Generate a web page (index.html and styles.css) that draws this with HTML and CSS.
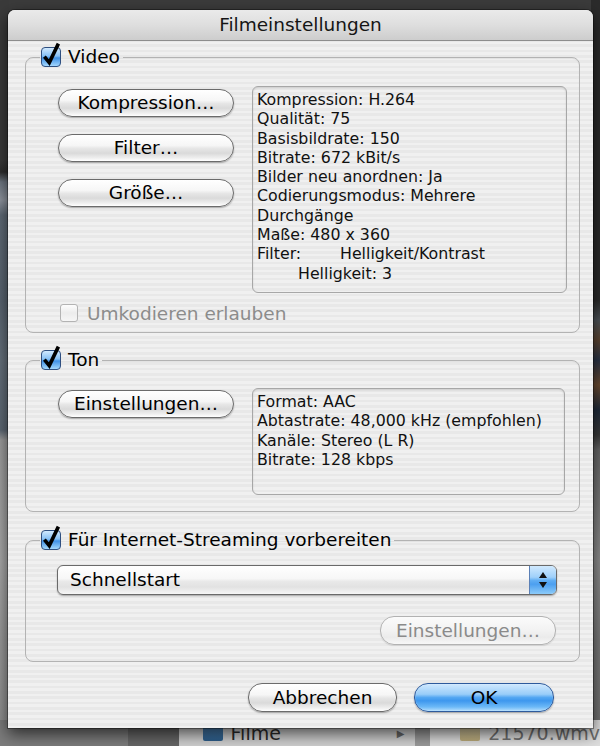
FILE: index.html
```html
<!DOCTYPE html>
<html lang="de">
<head>
<meta charset="utf-8">
<title>Filmeinstellungen</title>
<link rel="stylesheet" href="styles.css">
</head>
<body>
<div class="desktop">
  <div class="backdrop" aria-hidden="true">
    <div class="bg-left"></div>
    <div class="bg-right"></div>
    <div class="bg-bottom">
      <div class="bg-pane bg-pane0"></div>
      <div class="bg-pane bg-pane1"></div>
      <div class="bg-pane bg-pane2"><span class="bg-icon folder"></span><span class="bg-text">Filme</span><span class="bg-tri">&#9654;</span></div>
      <div class="bg-pane bg-pane3"></div>
      <div class="bg-pane bg-pane4"><span class="bg-icon file"></span><span class="bg-text light">21570.wmv</span></div>
    </div>
  </div>

  <div class="dialog">
    <div class="titlebar">Filmeinstellungen</div>
    <div class="content">

      <fieldset class="group group-video">
        <legend>
          <svg class="check" width="20" height="20" viewBox="0 0 20 20"><defs><linearGradient id="cb1" x1="0" y1="0" x2="0" y2="1"><stop offset="0" stop-color="#d6ecff"/><stop offset="0.45" stop-color="#86c0f6"/><stop offset="0.55" stop-color="#3f90e6"/><stop offset="1" stop-color="#a9dcff"/></linearGradient></defs><rect x="0.5" y="0.5" width="19" height="19" rx="3.5" fill="url(#cb1)" stroke="#2f4f80"/><path d="M3.4 9.6 L8.3 15.6 L17.4 -3.4" fill="none" stroke="#000" stroke-width="3.6" stroke-linejoin="miter"/></svg>Video
        </legend>
        <div class="row">
          <div class="btncol">
            <div class="btn">Kompression…</div>
            <div class="btn">Filter…</div>
            <div class="btn">Größe…</div>
          </div>
          <div class="info info-video">
            <div>Kompression: H.264</div>
            <div>Qualität: 75</div>
            <div>Basisbildrate: 150</div>
            <div>Bitrate: 672 kBit/s</div>
            <div>Bilder neu anordnen: Ja</div>
            <div>Codierungsmodus: Mehrere</div>
            <div>Durchgänge</div>
            <div>Maße: 480 x 360</div>
            <div><span class="tab">Filter:</span>Helligkeit/Kontrast</div>
            <div class="indent">Helligkeit: 3</div>
          </div>
        </div>
        <div class="recode">
          <span class="check-off"></span>Umkodieren erlauben
        </div>
      </fieldset>

      <fieldset class="group group-sound">
        <legend>
          <svg class="check" width="20" height="20" viewBox="0 0 20 20"><defs><linearGradient id="cb2" x1="0" y1="0" x2="0" y2="1"><stop offset="0" stop-color="#d6ecff"/><stop offset="0.45" stop-color="#86c0f6"/><stop offset="0.55" stop-color="#3f90e6"/><stop offset="1" stop-color="#a9dcff"/></linearGradient></defs><rect x="0.5" y="0.5" width="19" height="19" rx="3.5" fill="url(#cb2)" stroke="#2f4f80"/><path d="M3.4 9.6 L8.3 15.6 L17.4 -3.4" fill="none" stroke="#000" stroke-width="3.6" stroke-linejoin="miter"/></svg>Ton
        </legend>
        <div class="row row-sound">
          <div class="btncol btncol-sound">
            <div class="btn">Einstellungen…</div>
          </div>
          <div class="info info-sound">
            <div>Format: AAC</div>
            <div>Abtastrate: 48,000 kHz (empfohlen)</div>
            <div>Kanäle: Stereo (L R)</div>
            <div>Bitrate: 128 kbps</div>
          </div>
        </div>
      </fieldset>

      <fieldset class="group group-stream">
        <legend>
          <svg class="check" width="20" height="20" viewBox="0 0 20 20"><defs><linearGradient id="cb3" x1="0" y1="0" x2="0" y2="1"><stop offset="0" stop-color="#d6ecff"/><stop offset="0.45" stop-color="#86c0f6"/><stop offset="0.55" stop-color="#3f90e6"/><stop offset="1" stop-color="#a9dcff"/></linearGradient></defs><rect x="0.5" y="0.5" width="19" height="19" rx="3.5" fill="url(#cb3)" stroke="#2f4f80"/><path d="M3.4 9.6 L8.3 15.6 L17.4 -3.4" fill="none" stroke="#000" stroke-width="3.6" stroke-linejoin="miter"/></svg>Für Internet-Streaming vorbereiten
        </legend>
        <div class="popup">
          <div class="popup-label">Schnellstart</div>
          <div class="popup-arrows">
            <svg width="10" height="20" viewBox="0 0 10 20"><path d="M5 2 L9 8 L1 8 Z" fill="#111"/><path d="M1 12 L9 12 L5 18 Z" fill="#111"/></svg>
          </div>
        </div>
        <div class="btn btn-disabled">Einstellungen…</div>
      </fieldset>

      <div class="footer">
        <div class="btn btn-cancel">Abbrechen</div>
        <div class="btn btn-ok">OK</div>
      </div>

    </div>
  </div>
</div>
</body>
</html>
```

FILE: styles.css
```css
* { box-sizing: border-box; }
html, body { margin: 0; padding: 0; }
body {
  font-family: "DejaVu Sans", "Liberation Sans", sans-serif;
  background: #3c3c3c;
}
.desktop {
  position: relative;
  width: 600px;
  height: 746px;
  overflow: hidden;
  background: #3b3b3b;
}

/* ---------- blurred desktop behind the sheet ---------- */
.backdrop { position: absolute; inset: 0; }
.bg-left {
  position: absolute; left: 0; top: 0; width: 9px; height: 746px;
  background: linear-gradient(to bottom,
    #3a3a3a 0, #3a3a3a 160px, #2e2e2e 172px, #6e7782 182px, #9096a0 200px,
    #606b77 215px, #5a6571 300px, #66717c 360px, #5d6874 430px,
    #9d9d9d 440px, #a9a9a9 560px, #9a9a9a 640px, #8e8e8e 746px);
}
.bg-right {
  position: absolute; right: 0; top: 0; width: 9px; height: 746px;
  background: linear-gradient(to bottom,
    #2b2b2b 0, #2b2b2b 300px, #4d5358 320px, #5b4330 340px, #2a3446 360px,
    #6a4a30 385px, #1f2a3a 410px, #3a3a3a 435px, #686868 450px,
    #8e8e8e 560px, #7a7a7a 640px, #6e6e6e 746px);
}
.bg-bottom {
  position: absolute; left: 0; top: 720px; width: 600px; height: 26px;
  display: flex;
}
.bg-pane { height: 26px; display: flex; align-items: center; }
.bg-pane0 { width: 130px; background: #7c7c7c; }
.bg-pane1 { width: 52px; background: #666666; }
.bg-pane2 { width: 240px; background: #cfcfcf; padding-left: 24px; gap: 8px; }
.bg-pane3 { width: 16px; background: #9a9a9a; }
.bg-pane4 { flex: 1; background: #dedede; padding-left: 30px; gap: 8px; }
.bg-icon { width: 20px; height: 16px; border-radius: 2px; }
.bg-icon.folder { background: linear-gradient(#4f86b8, #2c5d8a); }
.bg-icon.file { background: linear-gradient(#e2d6b0, #b8a878); }
.bg-text { font-size: 19px; color: #2a2a2a; line-height: 20px; }
.bg-text.light { color: #707070; }
.bg-tri { margin-left: auto; margin-right: 10px; font-size: 10px; color: #666; }

/* ---------- sheet ---------- */
.dialog {
  position: relative;
  z-index: 1;
  width: 585px;
  height: 718px;
  margin: 10px 0 0 8px;
  border-radius: 7px 7px 0 0;
  overflow: hidden;
  background: repeating-linear-gradient(to bottom,
    #f0f0f0 0, #f0f0f0 2.6px, #e8e8e8 2.6px, #e8e8e8 5.3px);
  box-shadow: 0 0 0 1px rgba(0,0,0,0.35), 0 6px 16px rgba(0,0,0,0.65);
}
.titlebar {
  height: 31px;
  border-bottom: 1px solid #8d8d8d;
  background: linear-gradient(to bottom, #eaeaea 0%, #dedede 50%, #cdcdcd 100%);
  text-align: center;
  font-size: 18.5px;
  line-height: 30px;
  color: #151515;
}
.content {
  display: flow-root;
  padding: 0 13px 0 17px;
}

/* ---------- group boxes ---------- */
.group {
  display: block;
  margin: 0;
  min-width: 0;
  border: 1px solid #b3b3b3;
  border-radius: 8px;
  padding: 0 12px 0 14px;
  box-shadow: inset 0 1px 1px rgba(0,0,0,0.06);
}
.group legend {
  padding: 0 3px 0 1px;
  font-size: 18.5px;
  line-height: 22px;
  color: #000;
  white-space: nowrap;
}
.check {
  display: inline-block;
  vertical-align: top;
  margin: 1px 7px 0 0;
  overflow: visible;
}
.group-video { margin-top: 5px; padding-bottom: 8px; }
.group-sound { margin-top: 16px; padding-bottom: 16px; }
.group-stream { margin-top: 17px; padding-bottom: 16px; }

.row {
  display: flex;
  gap: 18px;
  margin: 18px 0 0 18px;
  align-items: flex-start;
}
.row-sound { margin-top: 17px; }
.btncol {
  width: 176px;
  flex: none;
  display: flex;
  flex-direction: column;
  gap: 17px;
  padding-top: 3px;
}
.btncol-sound { padding-top: 2px; }

/* ---------- aqua push buttons ---------- */
.btn {
  height: 28px;
  border-radius: 14px;
  border: 1px solid #6b6b6b;
  background: linear-gradient(to bottom,
    #ffffff 0%, #f6f6f6 40%, #e6e6e6 52%, #dadada 70%, #eeeeee 88%, #ffffff 100%);
  box-shadow: 0 1px 1.5px rgba(0,0,0,0.3), inset 0 0 1px rgba(255,255,255,0.9);
  font-size: 18.5px;
  line-height: 26px;
  text-align: center;
  color: #000;
}
.btn-disabled {
  width: 176px;
  height: 29px;
  margin: 21px 11px 0 auto;
  border-color: #b2b2b2;
  color: #8a8a8a;
  background: linear-gradient(to bottom, #fbfbfb 0%, #f2f2f2 50%, #ebebeb 75%, #f7f7f7 100%);
  box-shadow: 0 1px 1px rgba(0,0,0,0.1);
  line-height: 27px;
}
.footer {
  margin-top: 21px;
  padding-right: 26px;
  display: flex;
  justify-content: flex-end;
  gap: 17px;
}
.btn-cancel { width: 149px; height: 29px; line-height: 27px; }
.btn-ok {
  width: 140px; height: 29px; line-height: 27px;
  border-color: #2d5a9c;
  background: linear-gradient(to bottom,
    #cfe8fe 0%, #99cdf9 38%, #54a7f2 50%, #3d97ee 62%, #6cb9f7 85%, #b4defd 100%);
}

/* ---------- info boxes ---------- */
.info {
  width: 315px;
  flex: none;
  border: 1px solid #a7a7a7;
  border-radius: 6px;
  padding: 3px 4px;
  font-size: 15.8px;
  line-height: 19.3px;
  color: #111;
  box-shadow: inset 0 1px 2px rgba(0,0,0,0.12);
  white-space: nowrap;
}
.info-video { height: 207px; }
.info-sound { width: 313px; height: 107px; }
.tab { display: inline-block; width: 83px; }
.indent { padding-left: 41px; }

.recode {
  margin: 9px 0 0 20px;
  height: 22px;
  display: flex;
  align-items: center;
  gap: 9px;
  font-size: 18.5px;
  color: #8c8c8c;
}
.check-off {
  width: 18px;
  height: 18px;
  border: 1px solid #b3b3b3;
  border-radius: 3px;
  background: linear-gradient(to bottom, #fdfdfd, #ececec 50%, #f6f6f6);
}

/* ---------- popup ---------- */
.popup {
  margin: 14px 0 0 17px;
  width: 500px;
  height: 30px;
  display: flex;
  border: 1px solid #6a6a6a;
  border-radius: 6px;
  overflow: hidden;
  box-shadow: 0 1px 1.5px rgba(0,0,0,0.3);
  background: linear-gradient(to bottom,
    #ffffff 0%, #f7f7f7 45%, #e9e9e9 55%, #e2e2e2 75%, #f6f6f6 100%);
}
.popup-label {
  flex: 1;
  padding-left: 12px;
  font-size: 18.5px;
  line-height: 28px;
  color: #000;
}
.popup-arrows {
  width: 27px;
  flex: none;
  border-left: 1px solid #5b80b6;
  background: linear-gradient(to bottom,
    #d0e9fe 0%, #9fd0fa 40%, #5fadf3 52%, #4c9ff0 65%, #8ccbf9 100%);
  display: flex;
  align-items: center;
  justify-content: center;
}
```
